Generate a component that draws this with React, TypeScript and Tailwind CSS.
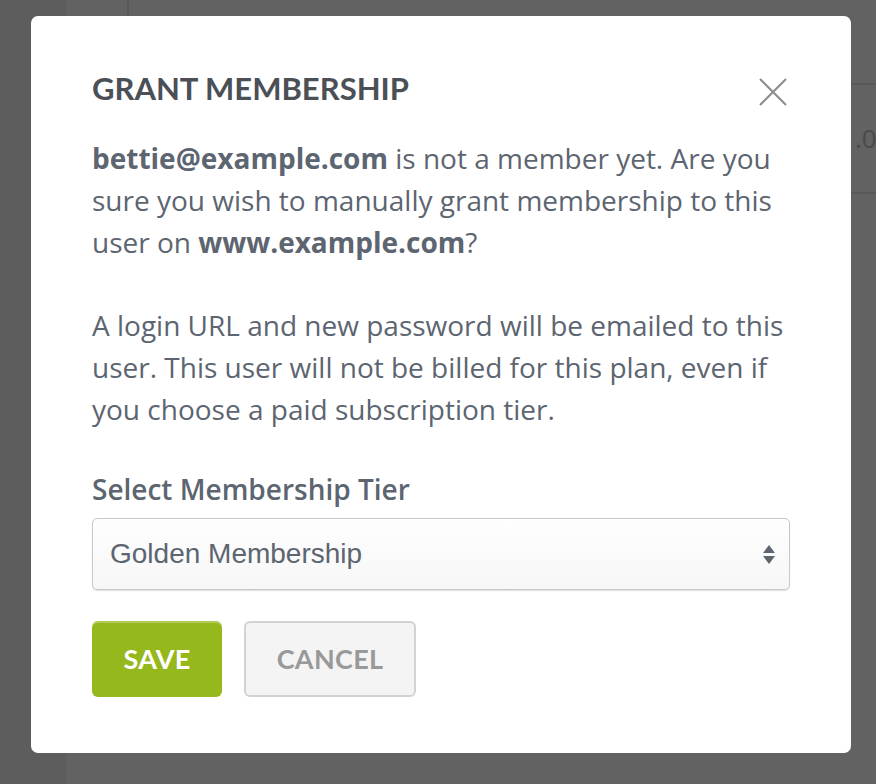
const bodyFont = { fontFamily: '"Open Sans", sans-serif' };
const headFont = { fontFamily: 'Lato, sans-serif' };

const App = () => {
  return (
    <div className="relative w-[876px] h-[784px] overflow-hidden bg-[#626262]">
      {/* dimmed page behind the modal */}
      <div className="absolute inset-0 flex">
        <div className="w-[66px] h-full bg-[#5d5d5d]" />
        <div className="w-[61px] h-full" />
        <div className="w-[2px] h-[16px] bg-[#575757]" />
        <div className="flex-1 flex justify-end">
          <div className="w-[25px] flex flex-col">
            <div className="mt-[83px] h-[2px] bg-[#585858]" />
            <div className="h-[107px] flex items-center text-[26px] text-[#4a4a4a] pl-[4px]" style={bodyFont}>
              .0
            </div>
            <div className="h-[2px] bg-[#585858]" />
          </div>
        </div>
      </div>

      <div className="relative pl-[31px] pt-[16px]">
        <div className="relative w-[820px] h-[737px] rounded-[7px] bg-white px-[61px] pt-[52px]">
          <button className="absolute right-[64px] top-[62px] w-[28px] h-[28px] text-[#8e8e8e]">
            <svg viewBox="0 0 28 28" className="w-[28px] h-[28px]" fill="none" stroke="currentColor" strokeWidth="2.2">
              <path d="M1 1 L27 27 M27 1 L1 27" />
            </svg>
          </button>

          <h2 className="text-[31px] leading-[40px] font-bold text-[#4b4f56]" style={headFont}>
            GRANT MEMBERSHIP
          </h2>

          <div className="mt-[29px] text-[28px] leading-[42px] text-[#5c6570]" style={bodyFont}>
            <p>
              <b className="font-bold">bettie@example.com</b> is not a member yet. Are you sure you wish to manually
              grant membership to this user on <b className="font-bold">www.example.com</b>?
            </p>
            <p className="mt-[41px]">
              A login URL and new password will be emailed to this user. This user will not be billed for this plan,
              even if you choose a paid subscription tier.
            </p>

            <label className="block mt-[38px] font-semibold">Select Membership Tier</label>
          </div>

          <div className="mt-[8px] h-[72px] rounded-[5px] border border-[#c6c8cb] bg-gradient-to-b from-[#fefefe] to-[#f7f7f7] shadow-[0_1px_1px_rgba(0,0,0,0.12)] flex items-center justify-between pl-[17px] pr-[14px]">
            <span className="text-[28px] text-[#5c6570]" style={{ fontFamily: '"Liberation Sans", Arial, sans-serif' }}>
              Golden Membership
            </span>
            <div className="flex flex-col items-center gap-[3px]">
              <svg viewBox="0 0 12 8" className="w-[12px] h-[8px]">
                <path d="M6 0 L12 8 L0 8 Z" fill="#5c6570" />
              </svg>
              <svg viewBox="0 0 12 8" className="w-[12px] h-[8px]">
                <path d="M0 0 L12 0 L6 8 Z" fill="#5c6570" />
              </svg>
            </div>
          </div>

          <div className="mt-[31px] flex gap-[22px]" style={headFont}>
            <button className="w-[130px] h-[76px] rounded-[6px] bg-[#95b81c] text-white text-[27px] font-bold tracking-[0.3px] shadow-[inset_0_2px_0_rgba(255,255,255,0.25)]">
              SAVE
            </button>
            <button className="w-[172px] h-[76px] rounded-[6px] border-2 border-[#d2d2d2] bg-[#f4f4f4] text-[#999999] text-[27px] font-bold tracking-[0.3px]">
              CANCEL
            </button>
          </div>
        </div>
      </div>
    </div>
  );
};

export default App;
